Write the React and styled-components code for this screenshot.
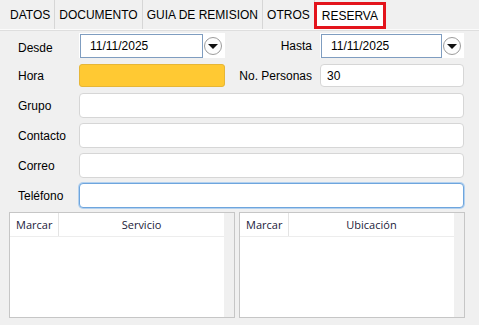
import React from 'react';
import styled, { createGlobalStyle, css } from 'styled-components';

const GlobalStyle = createGlobalStyle`
  html, body {
    margin: 0;
    background: #f0f0f0;
  }
  * { box-sizing: border-box; }
`;

const Page = styled.div`
  width: 479px;
  height: 325px;
  background: #f0f0f0;
  font-family: "Liberation Sans", Arial, sans-serif;
  font-size: 12px;
  color: #000;
  overflow: hidden;
`;

const TabBar = styled.div`
  display: flex;
  height: 30px;
  padding-left: 6px;
  border-bottom: 1px solid #fbfbfb;
  box-shadow: 0 1px 0 #dedede;
`;

const Tab = styled.div`
  display: flex;
  align-items: center;
  padding: 0 4px;
  height: 29px;
  border-right: 1px solid #d6d6d6;
  white-space: nowrap;

  ${p => p.$active && css`
    margin-top: 2px;
    height: 27px;
    padding: 0 5px;
    border: 3px solid #e3141c;
    background: #fff;
    margin-left: -1px;
  `}
`;

const Form = styled.div`
  display: grid;
  grid-template-columns: 61px 146px 95px 1fr;
  grid-auto-rows: 25px;
  row-gap: 5px;
  padding: 3px 15px 0 18px;
`;

const Label = styled.div`
  display: flex;
  align-items: center;
  padding-top: ${p => p.$down || 0}px;
`;

const RightLabel = styled(Label)`
  justify-content: flex-end;
  padding-right: 8px;
`;

const DateBox = styled.div`
  display: flex;
  align-items: center;
  gap: 1px;
  background: #fff;
  padding: 1px 3px 1px 1px;
`;

const DateField = styled.div`
  flex: 1;
  height: 24px;
  border: 1px solid #7f9dc0;
  display: flex;
  align-items: center;
  padding-left: 9px;
`;

const DropButton = styled.div`
  width: 18px;
  height: 18px;
  border-radius: 50%;
  border: 1px solid #9c9c9c;
  background: #fdfdfd;
  display: flex;
  align-items: center;
  justify-content: center;
`;

const Arrow = styled.div`
  width: 0;
  height: 0;
  margin-top: 1px;
  border-left: 5px solid transparent;
  border-right: 5px solid transparent;
  border-top: 5px solid #111;
`;

const YellowBox = styled.div`
  height: 23px;
  margin-top: 1px;
  background: #ffc933;
  border: 1px solid #e6b637;
  border-radius: 3px;
`;

const TextInput = styled.div`
  grid-column: ${p => (p.$wide ? '2 / -1' : 'auto')};
  height: ${p => (p.$short ? 23 : 25)}px;
  margin-top: ${p => (p.$short ? 1 : 0)}px;
  background: #fff;
  border: 1px solid ${p => (p.$focus ? '#6ea5dd' : '#d6d6d6')};
  box-shadow: ${p => (p.$focus ? '0 0 0 1px #b3d1ef' : 'none')};
  border-radius: 4px;
  display: flex;
  align-items: center;
  padding-left: 6px;
`;

const Tables = styled.div`
  display: flex;
  gap: 4px;
  padding: 0 14px 0 9px;
  margin-top: 4px;
`;

const Panel = styled.div`
  flex: 1;
  height: 106px;
  display: flex;
  border: 1px solid #c6c6c6;
  background: #f0f0f0;
`;

const Grid = styled.div`
  flex: 1;
  background: #fff;
  margin-right: 10px;
`;

const Header = styled.div`
  display: grid;
  grid-template-columns: 49px 1fr;
  height: 24px;
  border-bottom: 1px solid #ededed;
  font-family: "Open Sans", "Noto Sans", sans-serif;
  font-size: 11px;
  color: #1b1b3a;
`;

const HeadCell = styled.div`
  display: flex;
  align-items: center;
  justify-content: ${p => (p.$center ? 'center' : 'flex-start')};
  padding-left: ${p => (p.$center ? 0 : 6)}px;
  border-right: ${p => (p.$center ? 'none' : '1px solid #e4e4e4')};
`;

function DatePicker({ value }) {
  return (
    <DateBox>
      <DateField>{value}</DateField>
      <DropButton><Arrow /></DropButton>
    </DateBox>
  );
}

function Table({ title }) {
  return (
    <Panel>
      <Grid>
        <Header>
          <HeadCell>Marcar</HeadCell>
          <HeadCell $center>{title}</HeadCell>
        </Header>
      </Grid>
    </Panel>
  );
}

const tabs = ['DATOS', 'DOCUMENTO', 'GUIA DE REMISION', 'OTROS', 'RESERVA'];

export default function App() {
  return (
    <Page>
      <GlobalStyle />
      <TabBar>
        {tabs.map(t => (
          <Tab key={t} $active={t === 'RESERVA'}>{t}</Tab>
        ))}
      </TabBar>
      <Form>
        <Label $down={4}>Desde</Label>
        <DatePicker value="11/11/2025" />
        <RightLabel>Hasta</RightLabel>
        <DatePicker value="11/11/2025" />

        <Label>Hora</Label>
        <YellowBox />
        <RightLabel>No. Personas</RightLabel>
        <TextInput $short>30</TextInput>

        <Label>Grupo</Label>
        <TextInput $wide />
        <Label>Contacto</Label>
        <TextInput $wide />
        <Label>Correo</Label>
        <TextInput $wide />
        <Label>Teléfono</Label>
        <TextInput $wide $focus />
      </Form>
      <Tables>
        <Table title="Servicio" />
        <Table title="Ubicación" />
      </Tables>
    </Page>
  );
}
